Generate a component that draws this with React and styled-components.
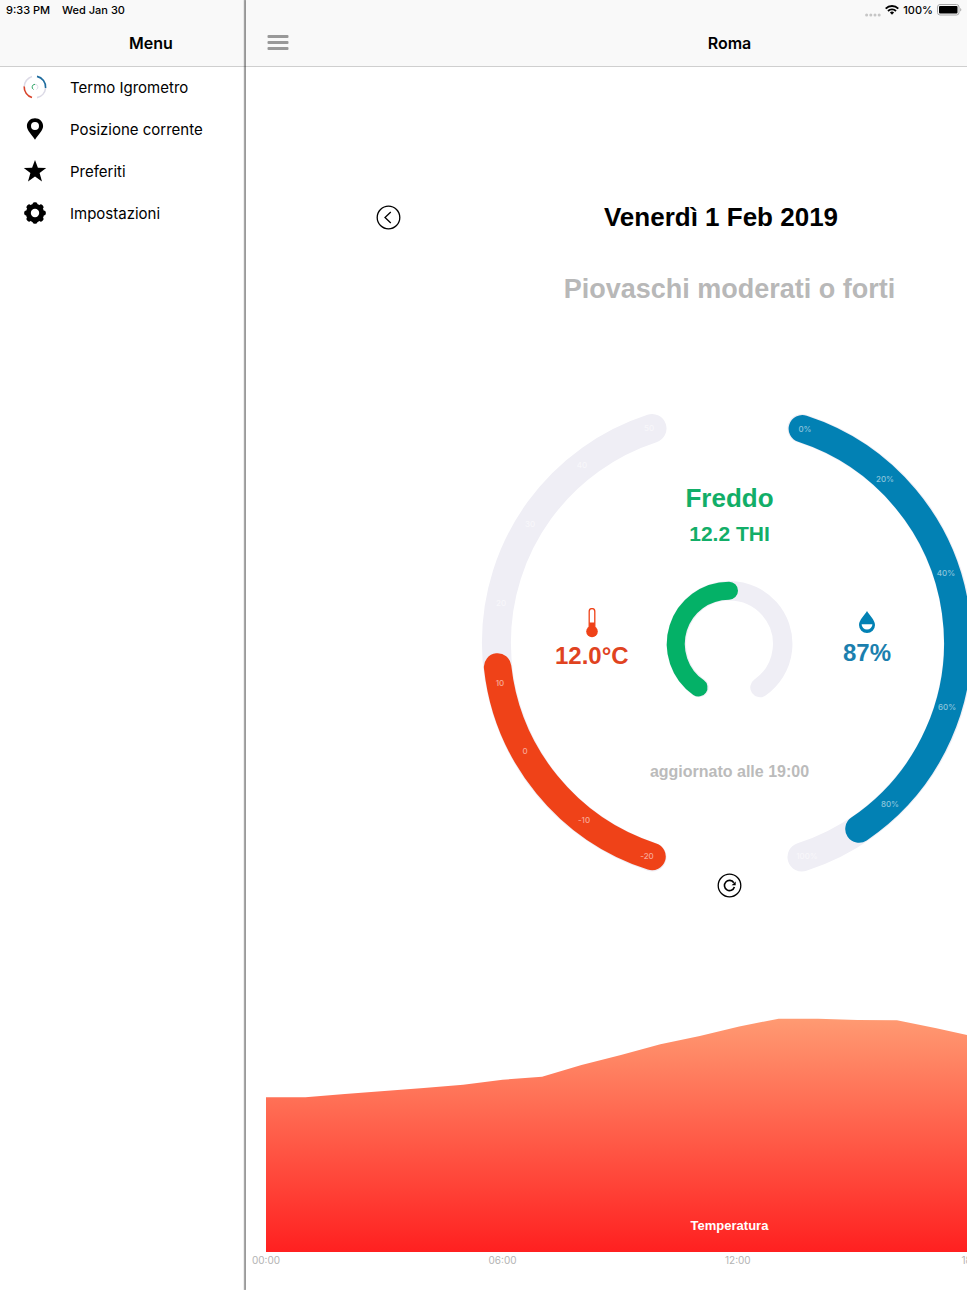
import React from "react"
import styled, { createGlobalStyle } from "styled-components"

const hours = ["00:00", "06:00", "12:00", "18:00"]

// height of the temperature curve for each hour, in chart units
const temperatures = [
  154.7, 154.7, 158, 161, 164, 167.3, 172.3, 175.3, 187, 197, 207.7, 216, 225.6,
  233.3, 233.3, 232, 231.7, 223.7, 215, 206, 198, 190, 183, 178,
]

const temperatureTicks = [
  { label: "50", x: 169, y: 19 },
  { label: "40", x: 102, y: 56 },
  { label: "30", x: 50, y: 115 },
  { label: "20", x: 21, y: 194 },
  { label: "10", x: 20, y: 274 },
  { label: "0", x: 45, y: 342 },
  { label: "-10", x: 104, y: 411 },
  { label: "-20", x: 167, y: 447 },
]

const humidityTicks = [
  { label: "0%", x: 325, y: 20 },
  { label: "20%", x: 405, y: 70 },
  { label: "40%", x: 466, y: 164 },
  { label: "60%", x: 467, y: 298 },
  { label: "80%", x: 410, y: 395 },
  { label: "100%", x: 327, y: 447 },
]

const GaugeIcon = () => (
  <svg width="24" height="24" viewBox="0 0 24 24" fill="none">
    <g strokeWidth="1.6">
      <path d="M9 1.4A11 11 0 0 0 1.2 12" stroke="#dcdae6" />
      <path d="M1.2 11.5A11 11 0 0 0 9 22.6" stroke="#d8432a" />
      <path d="M14 1.4A11 11 0 0 1 22.6 13" stroke="#1f6c9e" />
      <path d="M22.6 13A11 11 0 0 1 14 22.6" stroke="#dcdae6" />
    </g>
    <path d="M10.5 14.5A2.8 2.8 0 0 1 12 9.3" stroke="#2fa566" />
    <path d="M12 9.3A2.8 2.8 0 0 1 13.5 14.5" stroke="#dcdae6" />
  </svg>
)

const PinIcon = () => (
  <svg width="24" height="24" viewBox="0 0 24 24">
    <path
      fillRule="evenodd"
      d="M12 1.2C7.4 1.2 3.9 4.7 3.9 9.1C3.9 13.8 8.6 17.3 12 22.8C15.4 17.3 20.1 13.8 20.1 9.1C20.1 4.7 16.6 1.2 12 1.2ZM12 5A4 4 0 1 1 12 13A4 4 0 1 1 12 5Z"
    />
  </svg>
)

const StarIcon = () => (
  <svg width="24" height="24" viewBox="0 0 24 24">
    <path d="M12 1L14.9 8.7L23.2 8.9L16.6 14L19 22.5L12 17.6L5 22.5L7.4 14L0.8 8.9L9.1 8.7Z" />
  </svg>
)

const GearIcon = () => (
  <svg width="24" height="24" viewBox="0 0 24 24">
    {[0, 45, 90, 135].map(angle => (
      <rect
        key={angle}
        x="9.5"
        y="1.2"
        width="5"
        height="21.6"
        rx="2"
        transform={`rotate(${angle} 12 12)`}
      />
    ))}
    <circle cx="12" cy="12" r="9.2" />
    <circle cx="12" cy="12" r="4.2" fill="#fff" />
  </svg>
)

const BackIcon = () => (
  <svg width="25" height="25" viewBox="0 0 25 25" fill="none" stroke="#000">
    <circle cx="12.5" cy="12.5" r="11.3" strokeWidth="1.3" />
    <path d="M14.8 7L9 12.5L14.8 18" strokeWidth="1.3" />
  </svg>
)

const NextIcon = () => (
  <svg width="25" height="25" viewBox="0 0 25 25" fill="none" stroke="#000">
    <circle cx="12.5" cy="12.5" r="11.3" strokeWidth="1.3" />
    <path d="M10.2 7L16 12.5L10.2 18" strokeWidth="1.3" />
  </svg>
)

const RefreshIcon = () => (
  <svg width="25" height="25" viewBox="0 0 25 25" fill="none" stroke="#000">
    <circle cx="12.5" cy="12.5" r="11.3" strokeWidth="1.3" />
    <path d="M16.8 9.7A5.1 5.1 0 1 0 17.4 14" strokeWidth="1.6" />
    <path d="M18.7 8.4V12.2H14.6Z" fill="#000" stroke="none" />
  </svg>
)

const BurgerIcon = () => (
  <svg width="22" height="16" viewBox="0 0 22 16" fill="#999">
    <rect x="0.5" y="0" width="21" height="3" rx="1" />
    <rect x="0.5" y="6" width="21" height="3" rx="1" />
    <rect x="0.5" y="12" width="21" height="3" rx="1" />
  </svg>
)

const ThermometerIcon = () => (
  <svg width="14" height="30" viewBox="0 0 14 30">
    <path
      d="M4.2 20V3.4A2.8 2.8 0 0 1 9.8 3.4V20"
      fill="#fff"
      stroke="#ef4218"
      strokeWidth="1.3"
    />
    <rect x="4.2" y="14.5" width="5.6" height="8" fill="#ef4218" />
    <circle cx="7" cy="23.5" r="5.8" fill="#ef4218" />
  </svg>
)

const DropIcon = () => (
  <svg width="18" height="24" viewBox="0 0 18 24">
    <path
      d="M9 0C7 3.800 1 9 1 14A8 8 0 0 0 17 14C17 9 11 3.800 9 0Z"
      fill="#0281b4"
    />
    <path d="M3.6 13.2H14.4A5.4 5.4 0 1 1 3.6 13.2Z" fill="#fff" />
  </svg>
)

const WifiIcon = () => (
  <svg width="14" height="10" viewBox="0 0 14 10" fill="none" stroke="#000">
    <path d="M0.7 3.6A9 9 0 0 1 13.3 3.6" strokeWidth="1.9" />
    <path d="M3 6A5.7 5.7 0 0 1 11 6" strokeWidth="1.8" />
    <path d="M7 9.7L4.9 7.6A3 3 0 0 1 9.1 7.6Z" fill="#000" stroke="none" />
  </svg>
)

const BatteryIcon = () => (
  <svg width="25" height="12" viewBox="0 0 25 12">
    <rect
      x="0.5"
      y="0.5"
      width="21.5"
      height="10.5"
      rx="2.5"
      fill="none"
      stroke="#a8a8a8"
    />
    <rect x="2" y="2" width="18.5" height="7.5" rx="1" />
    <path d="M23.2 4V7.6A2 2 0 0 0 23.2 4Z" fill="#a8a8a8" />
  </svg>
)

const SignalDots = () => (
  <SignalDrawing width="16" height="4" viewBox="0 0 16 4" fill="#c6c6c6">
    {[1.6, 5.8, 10, 14.2].map(x => (
      <circle key={x} cx={x} cy="2" r="1.5" />
    ))}
  </SignalDrawing>
)

const menuItems = [
  { label: "Termo Igrometro", Icon: GaugeIcon },
  { label: "Posizione corrente", Icon: PinIcon },
  { label: "Preferiti", Icon: StarIcon },
  { label: "Impostazioni", Icon: GearIcon },
]

const Dial = () => (
  <DialDrawing viewBox="1 0 497 464" fill="none" strokeLinecap="round">
    <g strokeWidth="29" stroke="#efeef5">
      <path d="M172 448A225.3 225.3 0 0 1 172 19.5" />
      <path d="M322 19.5A225 225 0 0 1 322 448" />
    </g>
    <path
      d="M172 447.5A225.3 225.3 0 0 1 17.6 258"
      stroke="#ef4218"
      strokeWidth="27.5"
    />
    <path
      d="M322.4 19.8A225 225 0 0 1 379 420"
      stroke="#0281b4"
      strokeWidth="27.5"
    />
    <path
      d="M219 278.5A53.2 53.2 0 1 1 280 278.5"
      stroke="#efeef5"
      strokeWidth="19.5"
    />
    <path
      d="M218.5 278.5A53.2 53.2 0 0 1 249 181.7"
      stroke="#04b167"
      strokeWidth="18"
    />
    {[...temperatureTicks, ...humidityTicks].map(({ label, x, y }) => (
      <Tick key={label} x={x} y={y + 3}>
        {label}
      </Tick>
    ))}
  </DialDrawing>
)

const Chart = () => {
  const line = temperatures.map((t, i) => `${i},${234 - t}`).join(" ")
  return (
    <ChartArea>
      <ChartDrawing viewBox="0 0 23 234" preserveAspectRatio="none">
        <defs>
          <linearGradient id="heat" x1="0" y1="0" x2="0" y2="1">
            <stop offset="0" stopColor="#ff9a72" />
            <stop offset="1" stopColor="#ff2020" />
          </linearGradient>
        </defs>
        <polygon points={`0,234 ${line} 23,234`} fill="url(#heat)" />
      </ChartDrawing>
      <ChartTitle>Temperatura</ChartTitle>
    </ChartArea>
  )
}

const App = () => (
  <Screen>
    <GlobalStyle />
    <StatusBar>
      <StatusGroup $gap={12}>
        <span>9:33 PM</span>
        <span>Wed Jan 30</span>
      </StatusGroup>
      <StatusGroup $gap={4}>
        <SignalDots />
        <WifiIcon />
        <span>100%</span>
        <BatteryIcon />
      </StatusGroup>
    </StatusBar>
    <Drawer>
      <NavBar>
        <NavTitle>Menu</NavTitle>
      </NavBar>
      <MenuList>
        {menuItems.map(({ label, Icon }) => (
          <li key={label}>
            <MenuLink href="#">
              <Icon />
              {label}
            </MenuLink>
          </li>
        ))}
      </MenuList>
    </Drawer>
    <Main>
      <NavBar>
        <BurgerButton aria-label="Menu">
          <BurgerIcon />
        </BurgerButton>
        <NavTitle>Roma</NavTitle>
      </NavBar>
      <DayRow>
        <IconButton aria-label="Giorno precedente">
          <BackIcon />
        </IconButton>
        <DayTitle>Venerdì 1 Feb 2019</DayTitle>
        <IconButton aria-label="Giorno successivo">
          <NextIcon />
        </IconButton>
      </DayRow>
      <Conditions>Piovaschi moderati o forti</Conditions>
      <Gauge>
        <Dial />
        <Readings>
          <Comfort>Freddo</Comfort>
          <ComfortIndex>12.2 THI</ComfortIndex>
          <Values>
            <Value $color="#e0431f">
              <ThermometerIcon />
              12.0°C
            </Value>
            <Value $color="#1b7fae">
              <DropIcon />
              87%
            </Value>
          </Values>
          <Updated>aggiornato alle 19:00</Updated>
        </Readings>
      </Gauge>
      <IconButton aria-label="Aggiorna">
        <RefreshIcon />
      </IconButton>
      <ChartSection>
        <Chart />
        <Axis>
          {hours.map(hour => (
            <span key={hour}>{hour}</span>
          ))}
        </Axis>
      </ChartSection>
    </Main>
  </Screen>
)

export default App

const GlobalStyle = createGlobalStyle`
  * {
    box-sizing: border-box;
  }
  body {
    margin: 0;
    background: #fff;
    color: #000;
    font-family: Inter, "Liberation Sans", sans-serif;
  }
  svg {
    display: block;
    flex-shrink: 0;
  }
`
const Screen = styled.div`
  position: relative;
  display: flex;
  min-height: 100vh;
  overflow: hidden;
`
const StatusBar = styled.div`
  position: absolute;
  z-index: 2;
  top: 0;
  left: 0;
  right: 0;
  height: 20px;
  padding: 0 5px 0 6px;
  display: flex;
  align-items: center;
  justify-content: space-between;
  font-size: 11px;
  font-weight: 500;
`
const StatusGroup = styled.div`
  display: flex;
  align-items: center;
  gap: ${props => props.$gap}px;
`
const SignalDrawing = styled.svg`
  align-self: flex-end;
`
const Drawer = styled.nav`
  flex: 0 0 302px;
  margin-right: -56px;
`
const NavBar = styled.header`
  width: 100%;
  height: 67px;
  padding-top: 20px;
  display: grid;
  align-items: center;
  background: #f9f9f9;
  border-bottom: 1px solid #cfcfcf;
`
const NavTitle = styled.h1`
  grid-area: 1 / 1;
  margin: 0;
  text-align: center;
  font-size: 16px;
  font-weight: 600;
`
const MenuList = styled.ul`
  display: flex;
  flex-direction: column;
  gap: 2px;
  margin: 0;
  padding: 0;
  list-style: none;
`
const MenuLink = styled.a`
  display: flex;
  align-items: center;
  gap: 23px;
  height: 40px;
  padding-left: 23px;
  color: #000;
  font-size: 15px;
  text-decoration: none;
`
const Main = styled.main`
  position: relative;
  flex: 0 0 100%;
  display: flex;
  flex-direction: column;
  align-items: center;
  background: #fff;
  box-shadow: -2px 0 1px rgba(0, 0, 0, 0.3), -1px 0 2px rgba(0, 0, 0, 0.2);
  font-family: "Liberation Sans", Arial, sans-serif;
  font-weight: bold;
  ${NavTitle} {
    font-family: Inter, sans-serif;
  }
`
const IconButton = styled.button`
  padding: 0;
  border: 0;
  background: none;
  cursor: pointer;
`
const BurgerButton = styled(IconButton)`
  grid-area: 1 / 1;
  justify-self: start;
  z-index: 1;
  margin-left: 21px;
`
const DayRow = styled.div`
  width: 100%;
  margin-top: 134px;
  padding: 0 147px 0 130px;
  display: flex;
  align-items: center;
  justify-content: space-between;
`
const DayTitle = styled.h2`
  margin: 0;
  font-size: 26px;
  line-height: 32px;
`
const Conditions = styled.p`
  margin: 40px 0 0;
  color: #b8b8b8;
  font-size: 27px;
  line-height: 32px;
`
const Gauge = styled.section`
  display: grid;
  width: 497px;
  margin-top: 104px;
`
const DialDrawing = styled.svg`
  grid-area: 1 / 1;
  width: 100%;
`
const Tick = styled.text`
  fill: rgba(255, 255, 255, 0.55);
  font-family: Inter, sans-serif;
  font-size: 8px;
  font-weight: 500;
  text-anchor: middle;
`
const Readings = styled.div`
  grid-area: 1 / 1;
  z-index: 1;
  padding-top: 73px;
  text-align: center;
`
const Comfort = styled.h3`
  margin: 0;
  color: #12ae68;
  font-size: 26px;
  line-height: 32px;
`
const ComfortIndex = styled.p`
  margin: 8px 0 0;
  color: #12ae68;
  font-size: 21px;
  line-height: 24px;
`
const Values = styled.div`
  display: flex;
  justify-content: space-between;
  margin-top: 62px;
  padding: 0 87px 0 74px;
`
const Value = styled.div`
  display: flex;
  flex-direction: column;
  align-items: center;
  justify-content: center;
  gap: 4px;
  color: ${props => props.$color};
  font-size: 24px;
  line-height: 28px;
`
const Updated = styled.p`
  margin: 92px 0 0;
  color: #bbb;
  font-size: 16px;
  line-height: 20px;
`
const ChartSection = styled.section`
  width: 100%;
  margin-top: auto;
  padding-bottom: 22px;
`
const ChartArea = styled.div`
  display: grid;
  margin: 0 40px 0 20px;
`
const ChartDrawing = styled.svg`
  grid-area: 1 / 1;
  width: 100%;
  height: 234px;
`
const ChartTitle = styled.h4`
  grid-area: 1 / 1;
  align-self: end;
  z-index: 1;
  margin: 0 0 18px 20px;
  color: #fff;
  font-size: 13px;
  line-height: 16px;
  text-align: center;
`
const Axis = styled.div`
  display: grid;
  grid-template-columns: repeat(4, 1fr);
  margin: 0 15px 0 6px;
  color: #b3b3b3;
  font-family: Inter, sans-serif;
  font-size: 10px;
  font-weight: normal;
  line-height: 16px;
`
